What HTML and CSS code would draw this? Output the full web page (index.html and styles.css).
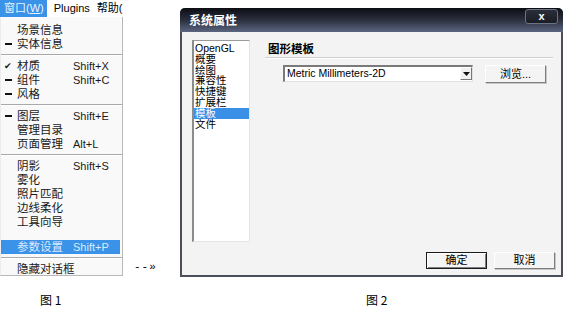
FILE: index.html
```html
<!DOCTYPE html>
<html lang="zh">
<head>
  <meta charset="UTF-8" />
  <title>参数设置</title>
  <link rel="stylesheet" href="styles.css">
</head>
<body>
  <div class="page">

    <div class="fig fig-menu">
      <div class="menu">
        <div class="menubar">
          <span class="bar-item active">窗口(<u>W</u>)</span>
          <span class="bar-item">Plugins</span>
          <span class="bar-item">帮助(</span>
        </div>
        <div class="dropdown">
          <div class="item"><span class="mark"></span><span class="label">场景信息</span></div>
          <div class="item"><span class="mark dash"></span><span class="label">实体信息</span></div>
          <div class="sep"></div>
          <div class="item"><span class="mark check">✔</span><span class="label">材质</span><span class="key">Shift+X</span></div>
          <div class="item"><span class="mark dash"></span><span class="label">组件</span><span class="key">Shift+C</span></div>
          <div class="item"><span class="mark dash"></span><span class="label">风格</span></div>
          <div class="sep"></div>
          <div class="item"><span class="mark dash"></span><span class="label">图层</span><span class="key">Shift+E</span></div>
          <div class="item"><span class="mark"></span><span class="label">管理目录</span></div>
          <div class="item"><span class="mark"></span><span class="label">页面管理</span><span class="key">Alt+L</span></div>
          <div class="sep"></div>
          <div class="item"><span class="mark"></span><span class="label">阴影</span><span class="key">Shift+S</span></div>
          <div class="item"><span class="mark"></span><span class="label">雾化</span></div>
          <div class="item"><span class="mark"></span><span class="label">照片匹配</span></div>
          <div class="item"><span class="mark"></span><span class="label">边线柔化</span></div>
          <div class="item"><span class="mark"></span><span class="label">工具向导</span></div>
          <div class="gap"></div>
          <div class="item selected"><span class="mark"></span><span class="label">参数设置</span><span class="key">Shift+P</span></div>
          <div class="sep"></div>
          <div class="item"><span class="mark"></span><span class="label">隐藏对话框</span></div>
        </div>
      </div>
      <div class="caption cap1">图 1</div>
    </div>

    <div class="arrow">--»</div>

    <div class="fig fig-dialog">
      <div class="dialog">
        <div class="titlebar">
          <span class="title">系统属性</span>
          <span class="close">x</span>
        </div>
        <div class="dialog-body">
          <ul class="list">
            <li>OpenGL</li>
            <li>概要</li>
            <li>绘图</li>
            <li>兼容性</li>
            <li>快捷键</li>
            <li>扩展栏</li>
            <li class="current">模板</li>
            <li>文件</li>
          </ul>
          <div class="panel">
            <div class="panel-head">图形模板</div>
            <div class="rule"></div>
            <div class="row">
              <div class="select">
                <span class="select-text">Metric Millimeters-2D</span>
                <span class="select-btn"><svg width="7" height="4" viewBox="0 0 7 4"><path d="M0 0h7L3.5 4z" fill="#111"/></svg></span>
              </div>
              <div class="btn browse">浏览...</div>
            </div>
            <div class="actions">
              <div class="btn default">确定</div>
              <div class="btn">取消</div>
            </div>
          </div>
        </div>
      </div>
      <div class="caption cap2">图 2</div>
    </div>

  </div>
</body>
</html>
```

FILE: styles.css
```css
body {
  margin: 0;
  background: #fff;
  font-family: "Liberation Sans", "Noto Sans CJK SC", sans-serif;
  color: #000;
}
.page {
  display: flex;
  align-items: flex-start;
}
.fig {
  display: flex;
  flex-direction: column;
}

/* menu */
.menu {
  width: 123px;
  font-size: 11px;
}
.menubar {
  display: flex;
  height: 17px;
  line-height: 17px;
  white-space: nowrap;
  overflow: hidden;
  background: #fff;
}
.bar-item {
  padding: 0 3px 0 4px;
  font-size: 11px;
}
.bar-item.active {
  background: #3a93e8;
  color: #e8f2ff;
  width: 45px;
  margin-right: 3px;
}
.dropdown {
  height: 259px;
  padding-top: 6px;
  box-sizing: border-box;
  background: #f9f9f9;
  border-right: 1px solid #b8b8b8;
  border-bottom: 1px solid #b8b8b8;
  border-left: 1px solid #ececec;
}
.item {
  display: flex;
  align-items: center;
  height: 14px;
  line-height: 14px;
  padding-left: 3px;
  margin-right: 2px;
  white-space: nowrap;
  color: #1a1a1a;
}
.item.selected {
  background: #3a93e8;
  color: #d9ebff;
}
.mark {
  width: 13px;
  flex: none;
  font-size: 9px;
  display: flex;
  align-items: center;
}
.mark.dash::before {
  content: "";
  display: block;
  width: 7px;
  height: 2px;
  background: #111;
  margin-left: 1px;
}
.label {
  min-width: 56px;
  flex: none;
  font-size: 11.5px;
}
.key {
  font-size: 11px;
}
.sep {
  height: 8px;
  display: flex;
  align-items: center;
}
.sep::after {
  content: "";
  display: block;
  width: 100%;
  border-top: 1px solid #a9a9a9;
  border-bottom: 1px solid #fff;
}
.gap {
  height: 11px;
}

.caption {
  font-family: "Noto Sans CJK SC", sans-serif;
  font-size: 12px;
  line-height: 14px;
  margin-top: 17px;
}
.cap1 {
  padding-left: 40px;
}
.cap2 {
  padding-left: 186px;
  margin-top: 16px;
}

.arrow {
  font-family: "Liberation Mono", monospace;
  font-size: 11px;
  letter-spacing: 1px;
  margin: 261px 0 0 11px;
  width: 46px;
}

/* dialog */
.dialog {
  width: 383px;
  height: 269px;
  margin-top: 8px;
  box-sizing: border-box;
  border: 2px solid #4a4f5b;
  border-top: none;
  border-radius: 5px 5px 0 0;
  display: flex;
  flex-direction: column;
  background: #f3f3f3;
}
.titlebar {
  height: 24px;
  flex: none;
  display: flex;
  align-items: flex-start;
  background: linear-gradient(#0c0e14, #2a2f3d 50%, #5b6580);
  border-radius: 5px 5px 0 0;
  margin: 0 -2px;
  padding: 0 5px 0 9px;
}
.title {
  color: #fff;
  font-family: "Noto Sans CJK SC", sans-serif;
  font-weight: bold;
  font-size: 12px;
  line-height: 24px;
}
.close {
  margin-left: auto;
  margin-top: 1px;
  width: 31px;
  height: 13px;
  line-height: 12px;
  text-align: center;
  color: #fff;
  font-weight: bold;
  font-size: 11px;
  background: linear-gradient(#2a2e38, #1a1d25);
  border: 1px solid #6d7380;
  border-radius: 3px;
}
.dialog-body {
  flex: 1;
  display: flex;
  padding: 8px 5px 6px 10px;
}
.list {
  list-style: none;
  margin: 0;
  padding: 2px 0 0;
  width: 58px;
  height: 202px;
  box-sizing: border-box;
  background: #fff;
  border-top: 1px solid #9a9a9a;
  border-left: 2px solid #8c8c8c;
  border-right: 1px solid #e4e4e4;
  border-bottom: 1px solid #e4e4e4;
  font-size: 10.5px;
  flex: none;
}
.list li {
  height: 10.8px;
  line-height: 11px;
  padding-left: 1px;
  white-space: nowrap;
  overflow: hidden;
}
.list li.current {
  background: #3a8fe6;
  color: #fff;
}
.panel {
  flex: 1;
  margin-left: 15px;
  display: flex;
  flex-direction: column;
}
.panel-head {
  margin-top: 1px;
  padding-left: 3px;
  font-family: "Noto Sans CJK SC", sans-serif;
  font-weight: bold;
  font-size: 11.5px;
  line-height: 14px;
}
.rule {
  margin-top: 2px;
  margin-right: 3px;
  border-top: 1px solid #cfcfcf;
  border-bottom: 1px solid #fff;
}
.row {
  display: flex;
  align-items: flex-start;
  margin: 6px 0 0 18px;
}
.select {
  width: 190px;
  height: 17px;
  box-sizing: border-box;
  display: flex;
  background: #fff;
  border-top: 2px solid #7a7a7a;
  border-left: 2px solid #7a7a7a;
  border-right: 1px solid #e2e2e2;
  border-bottom: 1px solid #e2e2e2;
}
.select-text {
  flex: 1;
  font-size: 10.5px;
  line-height: 13px;
  padding-left: 2px;
}
.select-btn {
  width: 12px;
  height: 13px;
  box-sizing: border-box;
  display: flex;
  align-items: center;
  justify-content: center;
  background: #f1f1f1;
  border: 1px solid #fff;
  border-right-color: #777;
  border-bottom-color: #777;
}
.btn {
  width: 61px;
  height: 18px;
  box-sizing: border-box;
  text-align: center;
  font-size: 11px;
  line-height: 16px;
  background: #f4f4f4;
  border: 1px solid #fff;
  border-right: 1px solid #7d7d7d;
  border-bottom: 1px solid #7d7d7d;
  box-shadow: 1px 1px 0 #c8c8c8;
}
.browse {
  margin-left: 12px;
}
.actions {
  margin-top: auto;
  display: flex;
  justify-content: flex-end;
  gap: 7px;
  padding-right: 1px;
}
.actions .btn {
  width: 61px;
  height: 17px;
  line-height: 15px;
}
.actions .btn.default {
  border: 1px solid #1a1a1a;
  box-shadow: inset 1px 1px 0 #fff, inset -1px -1px 0 #808080;
}
```
